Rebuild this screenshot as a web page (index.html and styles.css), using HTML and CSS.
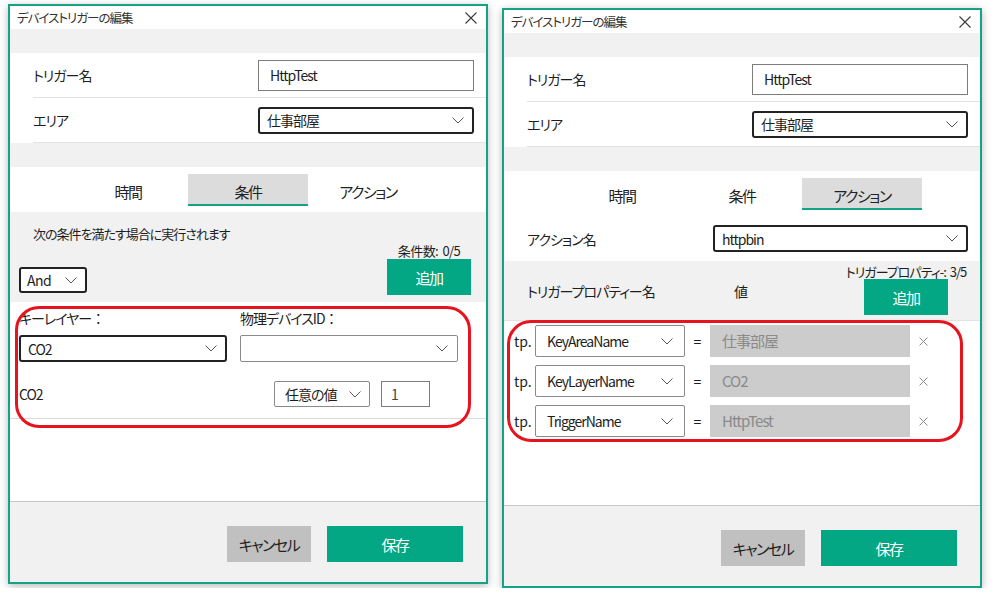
FILE: index.html
```html
<!DOCTYPE html>
<html lang="ja">
<head>
<meta charset="utf-8">
<title>デバイストリガーの編集</title>
<link rel="stylesheet" href="styles.css">
</head>
<body>
<div class="stage">
  <section class="dialog">
    <header class="titlebar">
      <span class="title">デバイストリガーの編集</span>
      <svg class="close" width="12" height="12" viewBox="0 0 12 12"><path d="M0.5 0.5 L11.5 11.5 M11.5 0.5 L0.5 11.5" stroke="#3a3a3a" stroke-width="1.1" fill="none"/></svg>
    </header>
    <div class="band"></div>
    <div class="form">
      <div class="form-row"><span class="label">トリガー名</span><div class="textbox">HttpTest</div></div>
      <div class="form-row"><span class="label">エリア</span><div class="select focus wide">仕事部屋<svg class="chev" width="12" height="7" viewBox="0 0 12 7"><path d="M0.5 0.5 L6 6 L11.5 0.5" stroke="#555" fill="none"/></svg></div></div>
    </div>
    <div class="band"></div>
    <nav class="tabs"><span class="tab">時間</span><span class="tab active">条件</span><span class="tab">アクション</span></nav>
    <div class="panel">
      <div class="cond-head">
        <div class="cond-left">
          <div class="desc">次の条件を満たす場合に実行されます</div>
          <div class="select focus and">And<svg class="chev" width="12" height="7" viewBox="0 0 12 7"><path d="M0.5 0.5 L6 6 L11.5 0.5" stroke="#555" fill="none"/></svg></div>
        </div>
        <div class="add-col">
          <div class="count">条件数: 0/5</div>
          <button class="btn btn-primary btn-add">追加</button>
        </div>
      </div>
      <div class="fields">
        <div class="field-grid">
          <span class="flabel">キーレイヤー<span class="colon">：</span></span>
          <span class="flabel">物理デバイスID<span class="colon">：</span></span>
          <div class="select focus">CO2<svg class="chev" width="12" height="7" viewBox="0 0 12 7"><path d="M0.5 0.5 L6 6 L11.5 0.5" stroke="#555" fill="none"/></svg></div>
          <div class="select plain"><span></span><svg class="chev" width="12" height="7" viewBox="0 0 12 7"><path d="M0.5 0.5 L6 6 L11.5 0.5" stroke="#555" fill="none"/></svg></div>
        </div>
        <div class="value-row">
          <span class="vlabel">CO2</span>
          <div class="select plain any">任意の値<svg class="chev" width="12" height="7" viewBox="0 0 12 7"><path d="M0.5 0.5 L6 6 L11.5 0.5" stroke="#555" fill="none"/></svg></div>
          <div class="textbox small">1</div>
        </div>
      </div>
    </div>
    <footer class="footer"><button class="btn btn-cancel">キャンセル</button><button class="btn btn-primary btn-save">保存</button></footer>
    <div class="annotation ann-left"></div>
  </section>

  <section class="dialog second">
    <header class="titlebar">
      <span class="title">デバイストリガーの編集</span>
      <svg class="close" width="12" height="12" viewBox="0 0 12 12"><path d="M0.5 0.5 L11.5 11.5 M11.5 0.5 L0.5 11.5" stroke="#3a3a3a" stroke-width="1.1" fill="none"/></svg>
    </header>
    <div class="band"></div>
    <div class="form">
      <div class="form-row"><span class="label">トリガー名</span><div class="textbox">HttpTest</div></div>
      <div class="form-row"><span class="label">エリア</span><div class="select focus wide">仕事部屋<svg class="chev" width="12" height="7" viewBox="0 0 12 7"><path d="M0.5 0.5 L6 6 L11.5 0.5" stroke="#555" fill="none"/></svg></div></div>
    </div>
    <div class="band"></div>
    <nav class="tabs"><span class="tab">時間</span><span class="tab">条件</span><span class="tab active">アクション</span></nav>
    <div class="panel">
      <div class="action-row"><span class="label">アクション名</span><div class="select focus action">httpbin<svg class="chev" width="12" height="7" viewBox="0 0 12 7"><path d="M0.5 0.5 L6 6 L11.5 0.5" stroke="#555" fill="none"/></svg></div></div>
      <div class="prop-head">
        <span class="ph-name">トリガープロパティー名</span>
        <span class="ph-value">値</span>
        <div class="add-col prop-add">
          <div class="count">トリガープロパティ-: 3/5</div>
          <button class="btn btn-primary btn-add">追加</button>
        </div>
      </div>
      <div class="prop-rows">
        <div class="prop-row"><span class="tp">tp.</span><div class="select plain prop">KeyAreaName<svg class="chev" width="12" height="7" viewBox="0 0 12 7"><path d="M0.5 0.5 L6 6 L11.5 0.5" stroke="#555" fill="none"/></svg></div><span class="eq">=</span><div class="ro">仕事部屋</div><span class="del"><svg width="9" height="9" viewBox="0 0 9 9"><path d="M0.5 0.5 L8.5 8.5 M8.5 0.5 L0.5 8.5" stroke="#8a8a8a" fill="none"/></svg></span></div>
        <div class="prop-row"><span class="tp">tp.</span><div class="select plain prop">KeyLayerName<svg class="chev" width="12" height="7" viewBox="0 0 12 7"><path d="M0.5 0.5 L6 6 L11.5 0.5" stroke="#555" fill="none"/></svg></div><span class="eq">=</span><div class="ro">CO2</div><span class="del"><svg width="9" height="9" viewBox="0 0 9 9"><path d="M0.5 0.5 L8.5 8.5 M8.5 0.5 L0.5 8.5" stroke="#8a8a8a" fill="none"/></svg></span></div>
        <div class="prop-row"><span class="tp">tp.</span><div class="select plain prop">TriggerName<svg class="chev" width="12" height="7" viewBox="0 0 12 7"><path d="M0.5 0.5 L6 6 L11.5 0.5" stroke="#555" fill="none"/></svg></div><span class="eq">=</span><div class="ro">HttpTest</div><span class="del"><svg width="9" height="9" viewBox="0 0 9 9"><path d="M0.5 0.5 L8.5 8.5 M8.5 0.5 L0.5 8.5" stroke="#8a8a8a" fill="none"/></svg></span></div>
      </div>
    </div>
    <footer class="footer"><button class="btn btn-cancel">キャンセル</button><button class="btn btn-primary btn-save">保存</button></footer>
    <div class="annotation ann-right"></div>
  </section>
</div>
</body>
</html>
```

FILE: styles.css
```css
* { box-sizing: border-box; }
html, body { margin: 0; padding: 0; background: #ffffff; }
body {
  font-family: "Noto Sans CJK JP", "Noto Sans", sans-serif;
  font-feature-settings: "palt";
  font-size: 14px;
  color: #1e1e1e;
  line-height: 20px;
  letter-spacing: -1px;
}
.stage {
  display: flex;
  align-items: flex-start;
  gap: 14px;
  padding: 4px 0 0 8px;
}
.dialog {
  position: relative;
  width: 480px;
  height: 580px;
  border: 2px solid #13a386;
  background: #ffffff;
  display: flex;
  flex-direction: column;
  box-shadow: 0 2px 8px rgba(0, 0, 0, 0.28);
}
.dialog.second { margin-top: 4px; }

.titlebar {
  height: 23px;
  flex: none;
  display: flex;
  align-items: center;
  justify-content: space-between;
  padding: 0 9px 0 7px;
}
.title { font-size: 12.5px; color: #333; letter-spacing: -1px; }
.close { display: block; }

.band { height: 24px; flex: none; background: #f1f1f1; }

.form { flex: none; }
.form-row {
  height: 45px;
  margin-left: 23px;
  padding-right: 12px;
  border-bottom: 1px solid #e2e2e2;
  display: flex;
  align-items: center;
  justify-content: space-between;
}
.label { font-size: 14px; }

.textbox {
  width: 216px;
  height: 31px;
  border: 1px solid #7c7c7c;
  padding: 0 11px;
  display: flex;
  align-items: center;
  font-size: 14px;
}
.textbox.small { width: 49px; height: 26px; padding: 0 9px; color: #444; }

.select {
  height: 27px;
  display: flex;
  align-items: center;
  justify-content: space-between;
  padding: 0 8px 0 7px;
  font-size: 14px;
  background: #fff;
}
.select.focus { border: 2px solid #222; border-radius: 3px; }
.select.plain { border: 1px solid #8a8a8a; border-radius: 2px; padding: 0 9px 0 8px; }
.select.wide { width: 216px; }
.chev { display: block; flex: none; }

.tabs {
  height: 45px;
  flex: none;
  display: flex;
  justify-content: center;
  align-items: flex-start;
  padding-top: 7px;
}
.tab {
  width: 120px;
  height: 32px;
  padding-top: 6px;
  border-bottom: 2px solid transparent;
  display: flex;
  align-items: center;
  justify-content: center;
  font-size: 15px;
  letter-spacing: -1.5px;
  color: #222;
}
.tab.active { background: #dcdcdc; border-bottom-color: #13a386; }

.panel { flex: 1; display: flex; flex-direction: column; }

/* conditions */
.cond-head {
  height: 90px;
  background: #f1f1f1;
  display: flex;
  justify-content: space-between;
  padding: 0 15px 0 9px;
}
.desc { margin: 12px 0 0 14px; font-size: 13px; line-height: 20px; }
.select.and { width: 68px; height: 26px; margin-top: 23px; padding: 0 8px 0 6px; letter-spacing: -0.5px; }
.add-col { width: 84px; display: flex; flex-direction: column; align-items: center; }
.count { margin-top: 31px; font-size: 13px; line-height: 16px; white-space: nowrap; letter-spacing: -0.6px; word-spacing: 2px; }
.btn {
  border: none;
  font-family: inherit;
  font-feature-settings: "palt";
  font-size: 15px;
  letter-spacing: -1.5px;
  height: 36px;
  padding: 0;
  cursor: pointer;
}
.btn-primary { background: #03a784; color: #fff; }
.btn-add { width: 84px; }
.btn-cancel { width: 84px; background: #c0c0c0; color: #222; }
.btn-save { width: 136px; }

.fields { padding: 6px 28px 11px 9px; border-bottom: 1px solid #dadada; }
.field-grid {
  display: grid;
  grid-template-columns: 208px 218px;
  column-gap: 13px;
  row-gap: 7px;
}
.flabel { font-size: 14px; line-height: 20px; }
.colon { font-feature-settings: normal; letter-spacing: 0; }
.value-row {
  margin: 19px 28px 0 0;
  display: flex;
  align-items: center;
  gap: 11px;
}
.vlabel { flex: 1; font-size: 14px; }
.select.any { width: 96px; height: 26px; padding: 0 8px 0 10px; }

/* action */
.action-row {
  height: 45px;
  margin-left: 23px;
  padding-right: 12px;
  display: flex;
  align-items: center;
  justify-content: space-between;
}
.select.action { width: 255px; }
.prop-head {
  height: 60px;
  background: #f1f1f1;
  border-bottom: 1px solid #e2e2e2;
  display: flex;
  align-items: center;
  padding: 0 32px 0 23px;
}
.ph-name { width: 207px; }
.ph-value { flex: 1; }
.prop-add { align-self: flex-start; }
.prop-add .count { margin-top: 3px; line-height: 15px; letter-spacing: -1px; }

.prop-rows {
  padding: 4px 0 0 10px;
  display: flex;
  flex-direction: column;
  gap: 8px;
}
.prop-row { display: flex; align-items: center; height: 32px; }
.tp { width: 21px; font-size: 14px; letter-spacing: 0; }
.select.prop { width: 150px; height: 32px; padding: 0 11px 0 11px; }
.eq { width: 25px; text-align: center; font-size: 14px; letter-spacing: 0; }
.ro {
  width: 200px;
  height: 32px;
  background: #cccccc;
  color: #8a8a8a;
  padding: 0 12px;
  display: flex;
  align-items: center;
  font-size: 15px;
}
.del { width: 26px; display: flex; justify-content: center; }

.footer {
  height: 81px;
  flex: none;
  background: #f1f1f1;
  border-top: 1px solid #c6c6c6;
  display: flex;
  justify-content: flex-end;
  align-items: flex-start;
  gap: 16px;
  padding: 24px 23px 0 0;
}

.annotation {
  position: absolute;
  width: 456px;
  height: 122px;
  border: 3px solid #e5141f;
  border-radius: 24px;
  pointer-events: none;
}
.ann-left { left: 5px; top: 300px; }
.ann-right { left: 3px; top: 310px; }
```
